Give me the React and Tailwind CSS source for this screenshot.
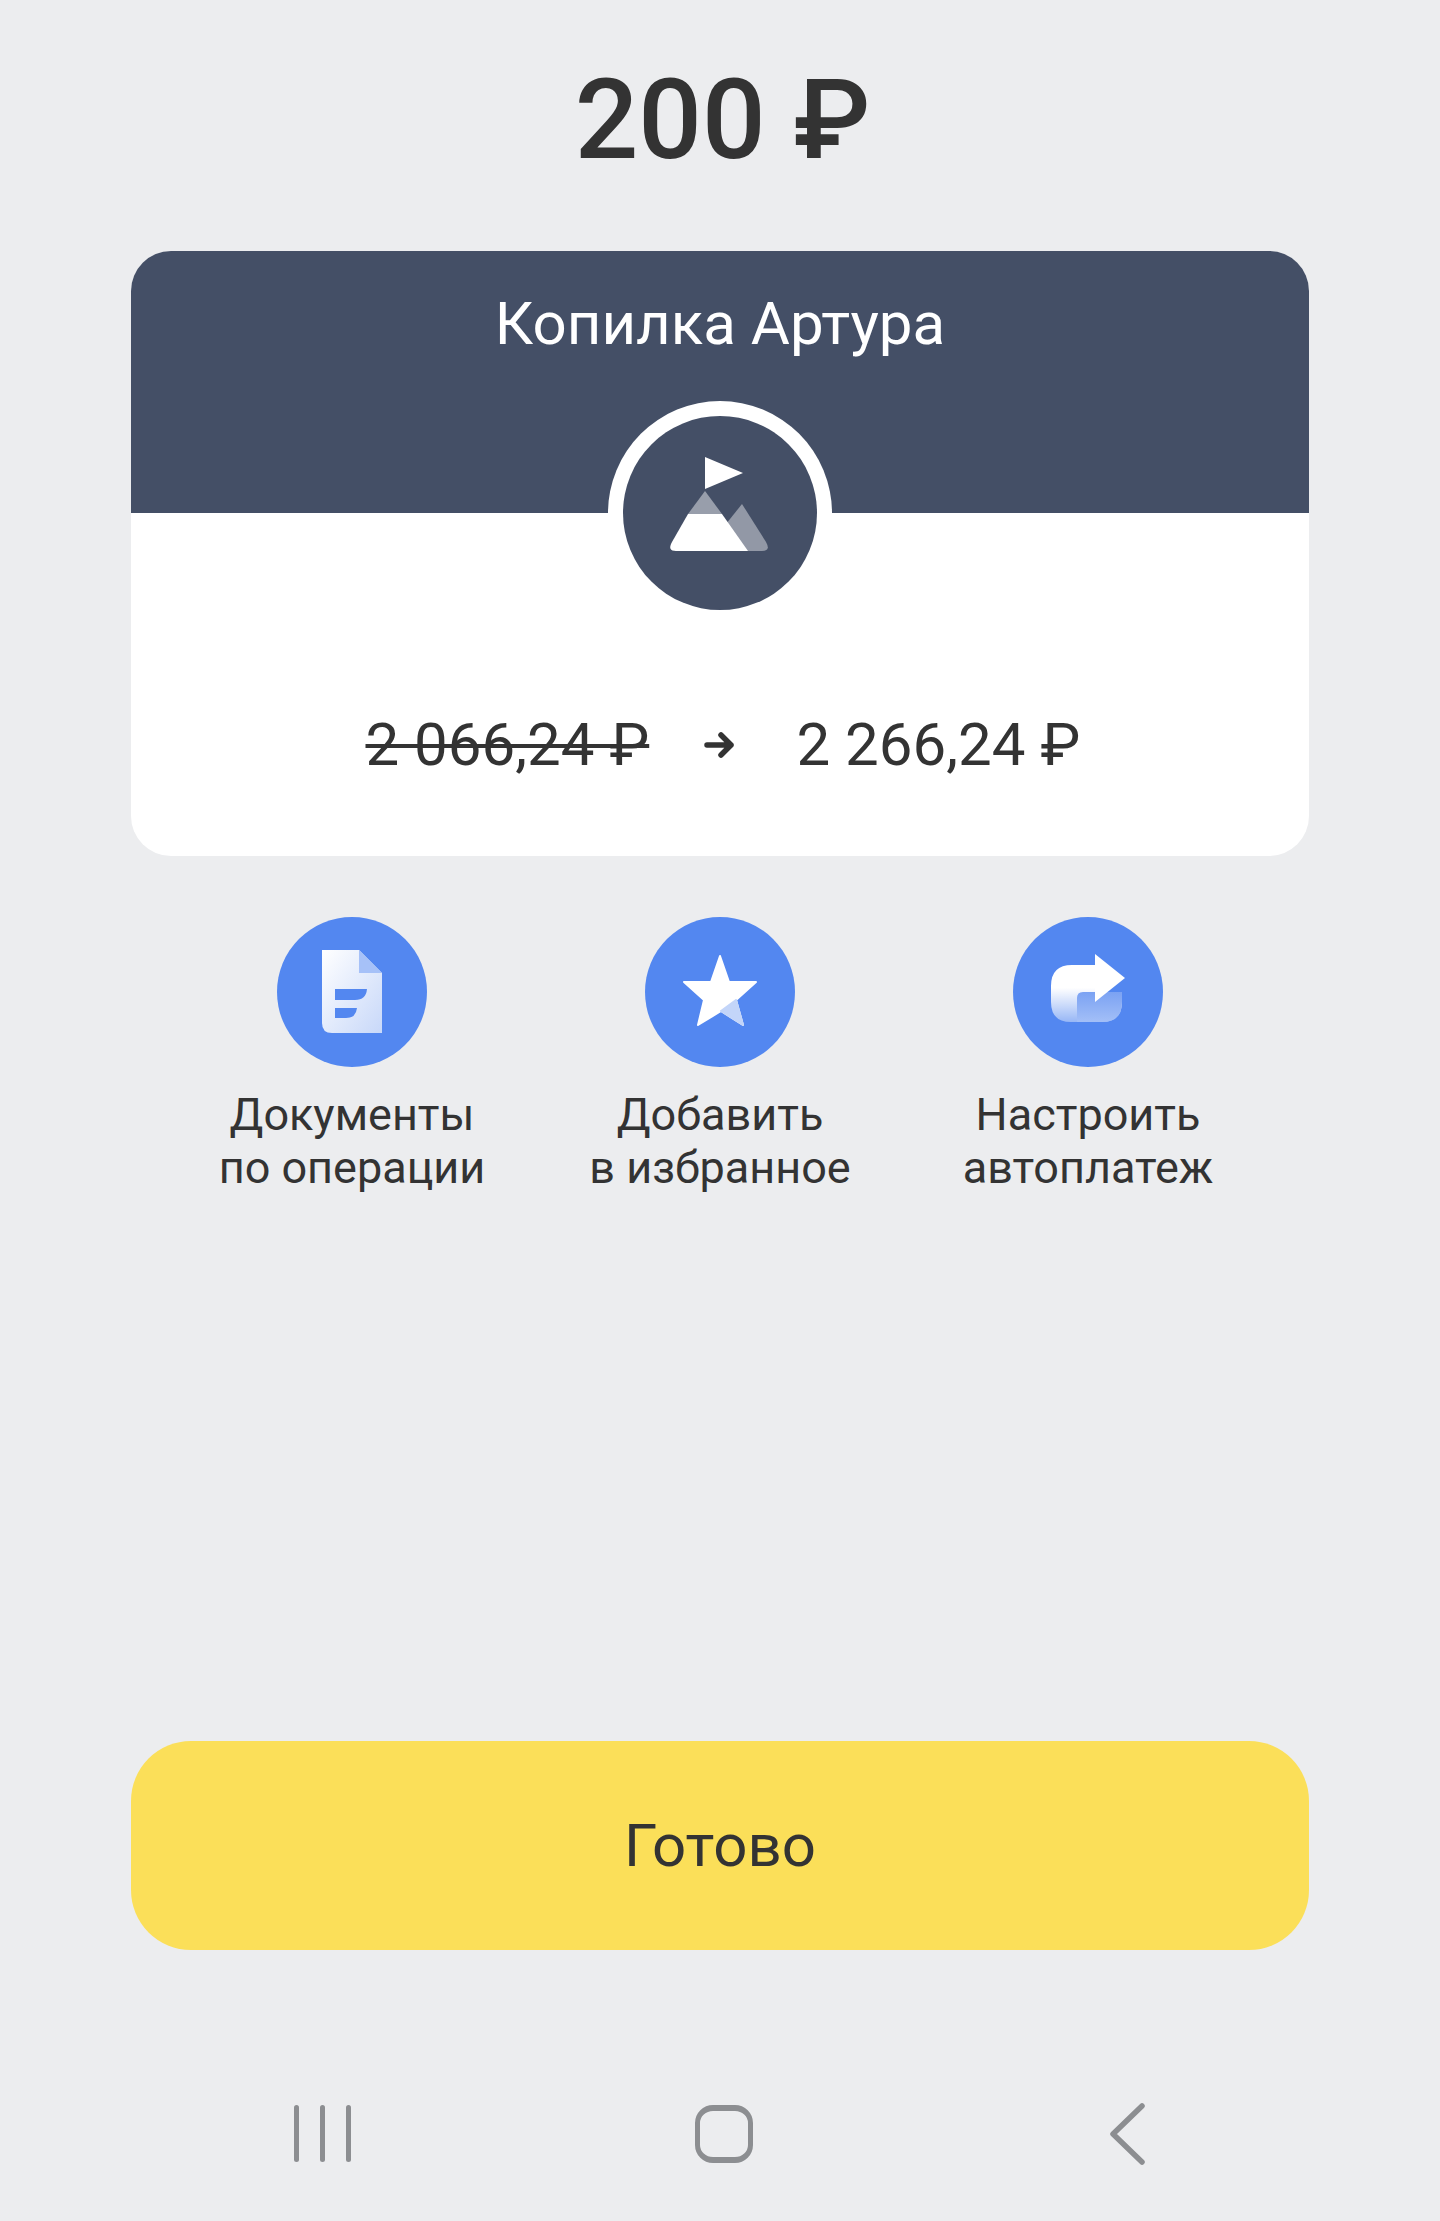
function DocIcon() {
  return (
    <svg width="150" height="150" viewBox="277 917 150 150">
      <defs>
        <linearGradient id="docFill" x1="0" y1="0" x2="1" y2="1">
          <stop offset="0" stopColor="#ffffff" />
          <stop offset="1" stopColor="#c8d8f9" />
        </linearGradient>
      </defs>
      <path d="M322 950H359L382 973V1033H332Q322 1033 322 1023Z" fill="url(#docFill)" />
      <path d="M359 950L382 973H359Z" fill="#a6c1f8" />
      <path d="M335 989H367Q366 1000 355 1000H335Z" fill="#5387f0" />
      <path d="M335 1008H357Q356 1018 346 1018H335Z" fill="#5387f0" />
    </svg>
  );
}

function StarIcon() {
  return (
    <svg width="150" height="150" viewBox="645 917 150 150">
      <path
        d="M720 956L729 982L756 982L736 1000L743 1025L721 1011L698 1025L704 1000L684 982L711 982Z"
        fill="#ffffff"
        stroke="#ffffff"
        strokeWidth="2"
        strokeLinejoin="round"
      />
      <path
        d="M721 1011L743 1025L736 1000Z"
        fill="#c3d5f9"
        stroke="#c3d5f9"
        strokeWidth="2"
        strokeLinejoin="round"
      />
    </svg>
  );
}

function ShareIcon() {
  return (
    <svg width="150" height="150" viewBox="1013 917 150 150">
      <defs>
        <linearGradient id="shareBody" x1="0" y1="0" x2="0" y2="1">
          <stop offset="0" stopColor="#ffffff" />
          <stop offset="0.4" stopColor="#ffffff" />
          <stop offset="1" stopColor="#ffffff" stopOpacity="0.4" />
        </linearGradient>
        <linearGradient id="shareInner" x1="0" y1="0" x2="0" y2="1">
          <stop offset="0" stopColor="#7ba2f3" />
          <stop offset="1" stopColor="#a3bff7" />
        </linearGradient>
      </defs>
      <path d="M1072 965H1096V1002H1122Q1122 1022 1102 1022H1071Q1051 1022 1051 1002V986Q1051 965 1072 965Z" fill="url(#shareBody)" />
      <path d="M1077 1022V998Q1077 992 1083 992H1122V1002Q1122 1022 1102 1022Z" fill="url(#shareInner)" />
      <path d="M1095 954L1125 978L1095 1002Z" fill="#ffffff" />
    </svg>
  );
}

function Action({ icon, first, second }) {
  return (
    <div className="flex flex-col items-center">
      <div className="w-[150px] h-[150px] rounded-full bg-[#5387f0]">{icon}</div>
      <div className="mt-[21px] text-center text-[45px] leading-[53px] text-[#333333]">
        {first}
        <br />
        {second}
      </div>
    </div>
  );
}

export default function App() {
  return (
    <div
      className="w-[1440px] h-[2221px] bg-[#ecedef] flex flex-col items-center overflow-hidden"
      style={{ fontFamily: "Roboto, 'Noto Sans', sans-serif" }}
    >
      <div className="mt-[52px] ml-[5px] h-[136px] text-[112px] leading-[136px] font-medium text-[#333333]">
        200 ₽
      </div>

      <div className="mt-[63px] w-[1178px] h-[605px] rounded-[40px] bg-white overflow-hidden relative">
        <div className="h-[262px] bg-[#444f66] pt-[39px] text-center text-[60px] leading-[68px] text-white">
          Копилка Артура
        </div>
        <div className="absolute left-[477px] top-[150px] w-[224px] h-[224px] rounded-full bg-white flex items-center justify-center">
          <div className="w-[194px] h-[194px] rounded-full bg-[#444f66]">
            <svg width="194" height="194" viewBox="623 417 194 194">
              <path d="M705 458L743 474L705 490Z" fill="#ffffff" />
              <path d="M742 505L766 543Q771 552 762 552H735L722 530Z" fill="#ffffff" fillOpacity="0.42" />
              <path d="M705 492L722 515H688Z" fill="#ffffff" fillOpacity="0.45" />
              <path d="M688 515H722L748 552H676Q667 552 672 543Z" fill="#ffffff" />
            </svg>
          </div>
        </div>
        <div className="mt-[197px] flex items-center justify-center text-[60px] leading-[70px] text-[#333333]">
          <span className="line-through decoration-[4px] w-[280px] whitespace-nowrap">2 066,24 ₽</span>
          <svg className="ml-[58px] mr-[63px]" width="30" height="30" viewBox="0 0 30 30" fill="none">
            <path d="M3 15H27M17 5L27 15L17 25" stroke="#333333" strokeWidth="5.5" strokeLinecap="round" strokeLinejoin="round" />
          </svg>
          <span className="w-[278px] whitespace-nowrap">2 266,24 ₽</span>
        </div>
      </div>

      <div className="mt-[61px] w-[1104px] grid grid-cols-3">
        <Action icon={<DocIcon />} first="Документы" second="по операции" />
        <Action icon={<StarIcon />} first="Добавить" second="в избранное" />
        <Action icon={<ShareIcon />} first="Настроить" second="автоплатеж" />
      </div>

      <button className="mt-[547px] w-[1178px] h-[209px] rounded-[60px] bg-[#fbdf59] text-[60px] leading-[68px] text-[#333333]">
        Готово
      </button>

      <div className="mt-[155px] w-[1178px] h-[60px] relative">
        <div className="absolute left-[163px] top-0 flex gap-[21px]">
          <div className="w-[5px] h-[57px] rounded-full bg-[#8c8e91]" />
          <div className="w-[5px] h-[57px] rounded-full bg-[#8c8e91]" />
          <div className="w-[5px] h-[57px] rounded-full bg-[#8c8e91]" />
        </div>
        <div className="absolute left-[564px] top-0 w-[58px] h-[58px] rounded-[18px] border-x-[5px] border-y-[6px] border-[#8c8e91]" />
        <svg className="absolute left-[977px] top-[-2px]" width="38" height="62" viewBox="0 0 38 62" fill="none">
          <path d="M34 3L5 31L34 59" stroke="#8c8e91" strokeWidth="5.5" strokeLinecap="round" strokeLinejoin="round" />
        </svg>
      </div>
    </div>
  );
}
